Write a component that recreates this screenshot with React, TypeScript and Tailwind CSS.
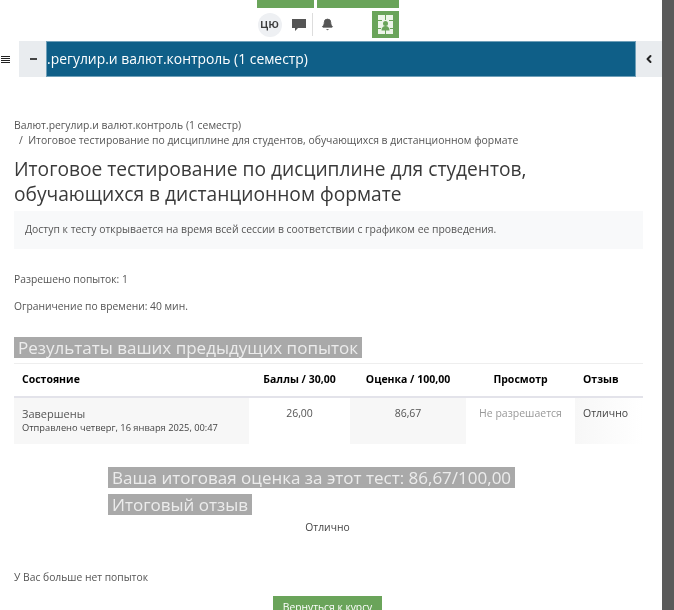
import { Bell, ChevronLeft } from "lucide-react";

const font = "font-['Open_Sans',sans-serif]";

function TopIcons() {
  return (
    <div className="flex flex-col items-center h-[41px]">
      <div className="flex gap-[3px] h-[8px] ml-[-7px] w-[142px]">
        <div className="w-[57px] bg-[#6aa45a]" />
        <div className="w-[82px] bg-[#6aa45a]" />
      </div>
      <div className="flex items-center w-[142px] h-[27px] mt-[3px] ml-[-7px] text-[#555]">
        <div className="ml-[1px] w-[24px] h-[24px] rounded-full bg-[#eef0f3] flex items-center justify-center text-[12.500px] font-semibold text-[#3c3c3c]">цю</div>
        <svg className="ml-[10px]" width="14" height="14" viewBox="0 0 14 14">
          <path d="M0 1h14v9H6l-3 3v-3H0z" fill="#555" />
        </svg>
        <div className="w-px h-[23px] bg-[#ddd] ml-[6px]" />
        <Bell className="ml-[8px] fill-[#555]" size={13} strokeWidth={1.5} />
        <div className="ml-auto w-[27px] h-[27px] bg-[#6aa45a] flex items-center justify-center">
          <svg width="15" height="19" viewBox="0 0 15 19">
            <rect width="15" height="19" fill="#eef5ea" />
            <path d="M7 0h1v5H7zM0 5h4v1H0zM11 5h4v1h-4zM0 13h3v1H0zM12 13h3v1h-3z" fill="#6aa45a" />
            <circle cx="7.500" cy="8.500" r="2.500" fill="#6aa45a" />
            <path d="M3.500 15.500c0-3 1.500-4.500 4-4.500s4 1.500 4 4.500z" fill="#6aa45a" />
            <path d="M7 15h1v4H7z" fill="#6aa45a" />
          </svg>
        </div>
      </div>
    </div>
  );
}

function CourseBar() {
  return (
    <div className="flex h-[36px] bg-[#e9ecef]">
      <div className="w-[19px] bg-white flex items-center">
        <div className="ml-[1px] w-[9px] flex flex-col gap-[1px]">
          <div className="h-[1px] bg-[#222]" />
          <div className="h-[1px] bg-[#222]" />
          <div className="h-[1px] bg-[#222]" />
          <div className="h-[1px] bg-[#222]" />
        </div>
      </div>
      <div className="w-[27px] flex items-center justify-center">
        <div className="w-[7px] h-[2px] ml-[1px] bg-[#444]" />
      </div>
      <div className="flex-1 bg-[#0f5f88] border border-[#6f9fb8] flex items-center overflow-hidden">
        <span className="text-[13.900px] text-white whitespace-nowrap">.регулир.и валют.контроль (1 семестр)</span>
      </div>
      <div className="w-[26px] flex items-center justify-center">
        <ChevronLeft size={12} strokeWidth={4} className="text-[#222]" />
      </div>
    </div>
  );
}

function ResultsTable() {
  return (
    <div className="mt-[5px] border-t border-[#eee]">
      <div className="flex h-[34px] items-center text-[10.500px] font-bold text-black border-b-2 border-[#e3e3ea]">
        <div className="w-[235px] pl-[8px]">Состояние</div>
        <div className="w-[101px] text-center">Баллы / 30,00</div>
        <div className="w-[116px] text-center">Оценка / 100,00</div>
        <div className="w-[109px] text-center">Просмотр</div>
        <div className="flex-1 pl-[8px]">Отзыв</div>
      </div>
      <div className="flex h-[46px] text-[10.500px] text-[#555]">
        <div className="w-[235px] pl-[8px] pt-[9px] bg-[#f7f7f7] leading-[13px]">
          <div className="text-[11px]">Завершены</div>
          <div className="text-[9.300px] mt-[1px] text-[#444]">Отправлено четверг, 16 января 2025, 00:47</div>
        </div>
        <div className="w-[101px] pt-[9px] leading-[13px] text-center">26,00</div>
        <div className="w-[116px] pt-[9px] leading-[13px] text-center bg-[#f7f7f7]">86,67</div>
        <div className="w-[109px] pt-[9px] leading-[13px] text-center text-[#999]">Не разрешается</div>
        <div className="flex-1 pl-[8px] pt-[9px] leading-[13px] text-[#444] bg-gradient-to-r from-[#f7f7f7] to-white">Отлично</div>
      </div>
    </div>
  );
}

export default function App() {
  return (
    <div className={`flex h-[610px] w-[674px] overflow-hidden bg-white blur-[0.5px] ${font}`}>
      <div className="w-[662px] shrink-0">
        <TopIcons />
        <CourseBar />
        <div className="px-[14px] w-[643px] box-content">
          <div className="w-[629px]">
            <div className="mt-[41px] text-[10.400px] leading-[15px] text-[#555]">Валют.регулир.и валют.контроль (1 семестр)</div>
            <div className="text-[10.400px] leading-[15px] text-[#555] pl-[5px]">/&nbsp; Итоговое тестирование по дисциплине для студентов, обучающихся в дистанционном формате</div>
            <h1 className="mt-[8px] text-[19.200px] leading-[25px] text-[#3a3a3a]">
              Итоговое тестирование по дисциплине для студентов,
              <br />
              обучающихся в дистанционном формате
            </h1>
            <div className="mt-[5px] h-[38px] bg-[#f8f9fa] flex items-center pl-[11px] text-[10.400px] text-[#555]">
              Доступ к тесту открывается на время всей сессии в соответствии с графиком ее проведения.
            </div>
            <p className="mt-[23px] text-[10.300px] leading-[14px] text-[#555]">Разрешено попыток: 1</p>
            <p className="mt-[13px] text-[10.300px] leading-[14px] text-[#555]">Ограничение по времени: 40 мин.</p>
            <h2 className="mt-[24px] w-fit bg-[#a9a9a9] px-[4px] text-[17px] leading-[21px] text-[#ececec]">Результаты ваших предыдущих попыток</h2>
            <ResultsTable />
            <div className="pl-[94px] mt-[23px]">
              <div className="w-fit bg-[#a9a9a9] px-[4px] text-[17px] leading-[21px] text-[#ececec]">Ваша итоговая оценка за этот тест: 86,67/100,00</div>
              <div className="mt-[6px] w-fit bg-[#a9a9a9] px-[4px] text-[17px] leading-[21px] text-[#ececec]">Итоговый отзыв</div>
            </div>
            <div className="mt-[5px] pr-[2px] text-center text-[10.300px] leading-[14px] text-[#444]">Отлично</div>
            <p className="mt-[36px] text-[10.300px] leading-[14px] text-[#555]">У Вас больше нет попыток</p>
            <div className="mt-[12px] flex justify-center pr-[2px]">
              <div className="w-[109px] h-[30px] pt-[4px] text-center bg-[#6aa45a] text-white text-[10.300px] leading-[14px]">Вернуться к курсу</div>
            </div>
          </div>
        </div>
      </div>
      <div className="flex-1 bg-[#5a5a5a]" />
    </div>
  );
}
